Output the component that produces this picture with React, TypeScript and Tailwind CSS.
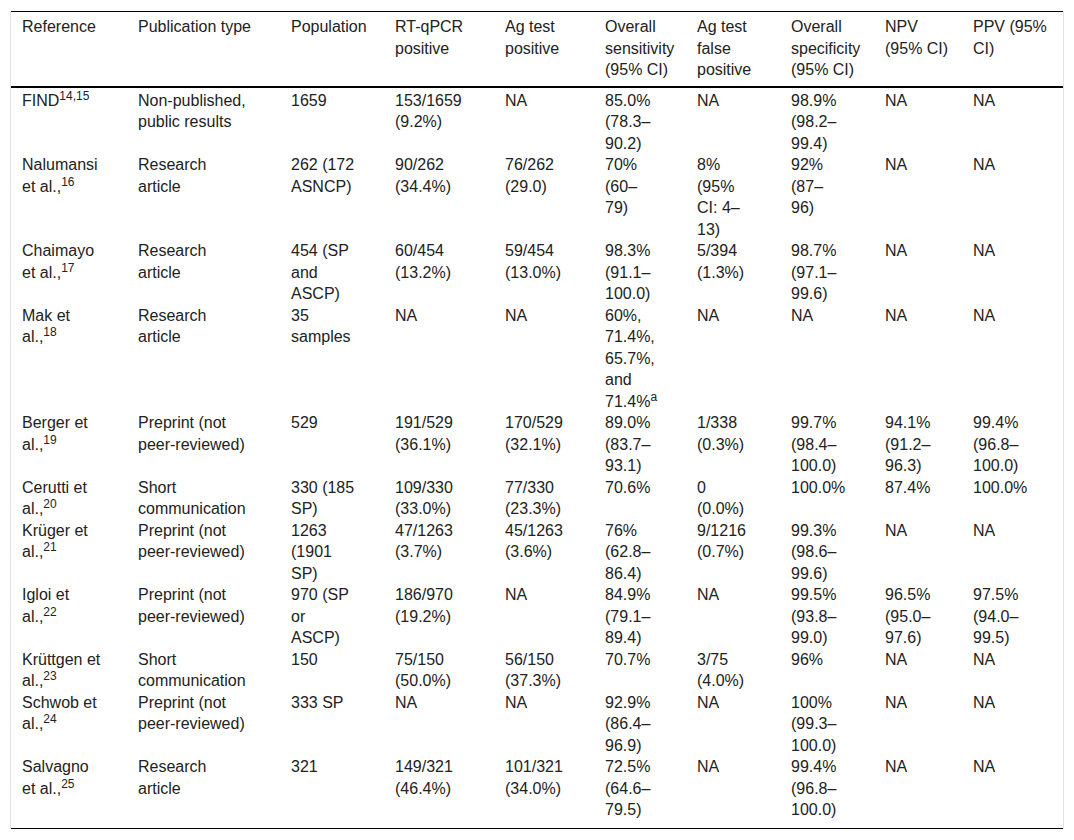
import React from "react";

type Cell = React.ReactNode;

// col = column width, head/body = width of the text box inside the cell
const columns = [
  { col: "w-[116px]", head: "w-[81px]", body: "w-[81px]" },
  { col: "w-[153px]", head: "w-[114px]", body: "w-[114px]" },
  { col: "w-[104px]", head: "w-[65px]", body: "w-[65px]" },
  { col: "w-[110px]", head: "w-[75px]", body: "w-[75px]" },
  { col: "w-[100px]", head: "w-[70px]", body: "w-[70px]" },
  { col: "w-[92px]", head: "w-[65px]", body: "w-[53.5px]" },
  { col: "w-[94px]", head: "w-[56px]", body: "w-[56px]" },
  { col: "w-[94px]", head: "w-[65px]", body: "w-[54.7px]" },
  { col: "w-[88px]", head: "w-[68px]", body: "w-[68px]" },
  { col: "w-[101px]", head: "w-[77px]", body: "w-[77px]" },
];

const headers: string[] = [
  "Reference",
  "Publication type",
  "Population",
  "RT-qPCR positive",
  "Ag test positive",
  "Overall sensitivity (95% CI)",
  "Ag test false positive",
  "Overall specificity (95% CI)",
  "NPV (95% CI)",
  "PPV (95% CI)",
];

const ref = (name: string, n: string) => (
  <>
    {name}
    <sup>{n}</sup>
  </>
);

const rows: Cell[][] = [
  [ref("FIND", "14,15"), "Non-published, public results", "1659", "153/1659 (9.2%)", "NA", "85.0% (78.3–90.2)", "NA", "98.9% (98.2–99.4)", "NA", "NA"],
  [ref("Nalumansi et al.,", "16"), "Research article", "262 (172 ASNCP)", "90/262 (34.4%)", "76/262 (29.0)", "70% (60–79)", "8% (95% CI: 4–13)", "92% (87–96)", "NA", "NA"],
  [ref("Chaimayo et al.,", "17"), "Research article", "454 (SP and ASCP)", "60/454 (13.2%)", "59/454 (13.0%)", "98.3% (91.1–100.0)", "5/394 (1.3%)", "98.7% (97.1–99.6)", "NA", "NA"],
  [
    ref("Mak et al.,", "18"),
    "Research article",
    "35 samples",
    "NA",
    "NA",
    <>
      60%, 71.4%, 65.7%, and 71.4%<sup>a</sup>
    </>,
    "NA",
    "NA",
    "NA",
    "NA",
  ],
  [ref("Berger et al.,", "19"), "Preprint (not peer-reviewed)", "529", "191/529 (36.1%)", "170/529 (32.1%)", "89.0% (83.7–93.1)", "1/338 (0.3%)", "99.7% (98.4–100.0)", "94.1% (91.2–96.3)", "99.4% (96.8–100.0)"],
  [ref("Cerutti et al.,", "20"), "Short communication", "330 (185 SP)", "109/330 (33.0%)", "77/330 (23.3%)", "70.6%", "0 (0.0%)", "100.0%", "87.4%", "100.0%"],
  [ref("Krüger et al.,", "21"), "Preprint (not peer-reviewed)", "1263 (1901 SP)", "47/1263 (3.7%)", "45/1263 (3.6%)", "76% (62.8–86.4)", "9/1216 (0.7%)", "99.3% (98.6–99.6)", "NA", "NA"],
  [ref("Igloi et al.,", "22"), "Preprint (not peer-reviewed)", "970 (SP or ASCP)", "186/970 (19.2%)", "NA", "84.9% (79.1–89.4)", "NA", "99.5% (93.8–99.0)", "96.5% (95.0–97.6)", "97.5% (94.0–99.5)"],
  [ref("Krüttgen et al.,", "23"), "Short communication", "150", "75/150 (50.0%)", "56/150 (37.3%)", "70.7%", "3/75 (4.0%)", "96%", "NA", "NA"],
  [ref("Schwob et al.,", "24"), "Preprint (not peer-reviewed)", "333 SP", "NA", "NA", "92.9% (86.4–96.9)", "NA", "100% (99.3–100.0)", "NA", "NA"],
  [ref("Salvagno et al.,", "25"), "Research article", "321", "149/321 (46.4%)", "101/321 (34.0%)", "72.5% (64.6–79.5)", "NA", "99.4% (96.8–100.0)", "NA", "NA"],
];

export default function App() {
  return (
    <div className="min-h-[840px] bg-white pt-[11px] pl-[10px] font-['Liberation_Sans',Arial,sans-serif] text-[16px] leading-[21.5px] text-[#222]">
      <div className="w-[1054px] border-x border-[#e3e3e3]">
        <table className="w-full table-fixed border-t border-b border-black">
          <colgroup>
            {columns.map((c, i) => (
              <col key={i} className={c.col} />
            ))}
          </colgroup>
          <thead>
            <tr className="border-b-2 border-black">
              {headers.map((h, i) => (
                <th key={i} className="pl-[11px] pt-[4px] pb-[5px] text-left align-top font-normal">
                  <div className={columns[i].head}>{h}</div>
                </th>
              ))}
            </tr>
          </thead>
          <tbody>
            {rows.map((row, r) => (
              <tr key={r}>
                {row.map((cell, i) => (
                  <td
                    key={i}
                    className={
                      r === 0
                        ? "pl-[11px] pt-[2px] align-top"
                        : r === rows.length - 1
                          ? "pl-[11px] pb-[7px] align-top"
                          : "pl-[11px] align-top"
                    }
                  >
                    <div className={columns[i].body}>{cell}</div>
                  </td>
                ))}
              </tr>
            ))}
          </tbody>
        </table>
      </div>
    </div>
  );
}
